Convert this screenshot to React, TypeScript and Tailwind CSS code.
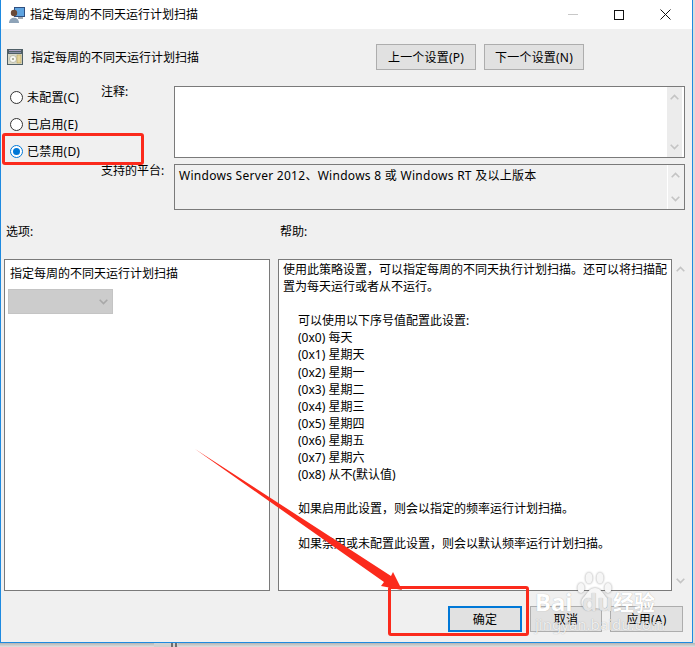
const helpLines: { text: string; indent?: boolean }[] = [
  { text: '使用此策略设置，可以指定每周的不同天执行计划扫描。还可以将扫描配' },
  { text: '置为每天运行或者从不运行。' },
  { text: '' },
  { text: '可以使用以下序号值配置此设置:', indent: true },
  { text: '(0x0) 每天', indent: true },
  { text: '(0x1) 星期天', indent: true },
  { text: '(0x2) 星期一', indent: true },
  { text: '(0x3) 星期二', indent: true },
  { text: '(0x4) 星期三', indent: true },
  { text: '(0x5) 星期四', indent: true },
  { text: '(0x6) 星期五', indent: true },
  { text: '(0x7) 星期六', indent: true },
  { text: '(0x8) 从不(默认值)', indent: true },
  { text: '' },
  { text: '如果启用此设置，则会以指定的频率运行计划扫描。', indent: true },
  { text: '' },
  { text: '如果禁用或未配置此设置，则会以默认频率运行计划扫描。', indent: true },
];

function Chevron({ up, color = '#c4c4c4' }: { up?: boolean; color?: string }) {
  return (
    <svg width="9" height="6" viewBox="0 0 9 6" fill="none" stroke={color} strokeWidth="1.6">
      <path d={up ? 'M0.7 5.2 L4.5 1.4 L8.3 5.2' : 'M0.7 0.8 L4.5 4.6 L8.3 0.8'} />
    </svg>
  );
}

function Radio({ label, checked }: { label: string; checked?: boolean }) {
  return (
    <div className="flex items-center h-[17px] gap-[4px]">
      <div className={`w-[13px] h-[13px] rounded-full border bg-white flex items-center justify-center ${checked ? 'border-[#0078d7]' : 'border-[#333333]'}`}>
        {checked && <div className="w-[7px] h-[7px] rounded-full bg-[#0078d7]" />}
      </div>
      <span className="tracking-[0.2px]">{label}</span>
    </div>
  );
}

function SmallScroll({ className }: { className: string }) {
  return (
    <div className={`flex flex-col justify-between items-center py-[7px] w-[15px] ${className}`}>
      <Chevron up />
      <Chevron />
    </div>
  );
}

function Button({ label, className, primary }: { label: string; className: string; primary?: boolean }) {
  return (
    <div className={`flex items-center justify-center h-[26px] tracking-[0.2px] bg-[#e1e1e1] ${primary ? 'border-2 border-[#0078d7]' : 'border border-[#adadad]'} ${className}`}>
      {label}
    </div>
  );
}

export default function App() {
  return (
    <div className="relative w-[695px] h-[647px] overflow-hidden bg-[#dcdcdc] text-[12px] leading-[17px] text-black font-['Noto_Sans','Noto_Sans_CJK_SC',sans-serif]">
      <div className="flex flex-col w-[693px] h-[643px] bg-[#f0f0f0] border-x border-b border-[#1e8ae0]">
        {/* Title bar */}
        <div className="flex items-center h-[29px] bg-white shrink-0">
          <svg width="16" height="16" viewBox="0 0 16 16" className="ml-[8px] mr-[5px]">
            <rect x="5" y="0" width="11" height="10" fill="#2f4f80" />
            <rect x="6" y="1" width="9" height="8" fill="#5fa4e0" />
            <rect x="9" y="10" width="5" height="2" fill="#a0a8b0" />
            <circle cx="5" cy="6" r="3.2" fill="#6a4a38" />
            <path d="M0 16 C0 9 10 9 10 16 Z" fill="#8ea3b8" />
          </svg>
          <span>指定每周的不同天运行计划扫描</span>
          <div className="ml-auto flex items-center mr-[4px]">
            <div className="w-[46px] flex justify-center">
              <div className="w-[10px] h-px bg-[#c8c8c8]" />
            </div>
            <div className="w-[46px] flex justify-center">
              <div className="w-[10px] h-[10px] border border-[#111111]" />
            </div>
            <div className="w-[46px] flex justify-center">
              <svg width="11" height="11" viewBox="0 0 11 11" stroke="#111111" strokeWidth="1">
                <path d="M0.5 0.5 L10.5 10.5 M10.5 0.5 L0.5 10.5" />
              </svg>
            </div>
          </div>
        </div>

        {/* Policy name and prev / next */}
        <div className="flex items-center h-[26px] mt-[15px] shrink-0">
          <svg width="16" height="16" viewBox="0 0 16 16" className="ml-[6px] mr-[8px]">
            <rect x="0" y="0" width="16" height="16" fill="#4f5f66" />
            <rect x="2" y="1" width="12" height="1" fill="#a8a0c0" />
            <rect x="2" y="3" width="12" height="1" fill="#8890a8" />
            <rect x="1" y="5" width="14" height="10" fill="#d8d8c8" />
            <circle cx="6" cy="10" r="3.5" fill="#f8f8f4" stroke="#a0a088" strokeWidth="0.6" />
            <circle cx="6" cy="10" r="1" fill="#9a9a80" />
            <rect x="10" y="6" width="4" height="8" fill="#e4d49a" stroke="#b09a50" strokeWidth="0.5" />
          </svg>
          <span>指定每周的不同天运行计划扫描</span>
          <div className="ml-auto flex gap-[8px] mr-[108px]">
            <Button label="上一个设置(P)" className="w-[100px]" />
            <Button label="下一个设置(N)" className="w-[100px]" />
          </div>
        </div>

        {/* Radios, comment, platform */}
        <div className="flex mt-[16px] shrink-0">
          <div className="flex flex-col gap-[10px] w-[100px] pl-[9px] pt-[3px]">
            <Radio label="未配置(C)" />
            <Radio label="已启用(E)" />
            <Radio label="已禁用(D)" checked />
          </div>
          <div className="flex flex-col justify-between w-[73px] h-[124px]">
            <span className="mt-[-3px]">注释:</span>
            <span className="mb-[31px]">支持的平台:</span>
          </div>
          <div className="flex flex-col gap-[6px] w-[511px]">
            <div className="flex justify-end h-[72px] bg-white border border-[#7a7a7a]">
              <SmallScroll className="bg-[#ececec] mr-[2px]" />
            </div>
            <div className="flex justify-between h-[46px] border border-[#7a7a7a]">
              <span className="pl-[4px] pt-[2px] tracking-[0.28px]">Windows Server 2012、Windows 8 或 Windows RT 及以上版本</span>
              <SmallScroll className="border-l border-white mr-[2px]" />
            </div>
          </div>
        </div>

        {/* Section labels */}
        <div className="flex mt-[13px] h-[17px] shrink-0">
          <span className="ml-[5px] w-[274px]">选项:</span>
          <span>帮助:</span>
        </div>

        {/* Option and help panels */}
        <div className="flex mt-[19px] h-[332px] shrink-0">
          <div className="ml-[3px] w-[266px] bg-white border border-[#7a7a7a] pt-[5px] px-[5px]">
            <div>指定每周的不同天运行计划扫描</div>
            <div className="flex items-center justify-end mt-[7px] ml-[-2px] w-[105px] h-[25px] bg-[#cccccc] border border-[#c4c4c4] pr-[4px]">
              <Chevron color="#a8a8a8" />
            </div>
          </div>
          <div className="ml-[8px] w-[394px] bg-white border border-[#7a7a7a] pl-[4px] pt-[1px]">
            {helpLines.map((line, i) => (
              <div key={i} className={`h-[17.1px] whitespace-nowrap ${line.indent ? 'pl-[15px]' : ''}`}>
                {line.text}
              </div>
            ))}
          </div>
          <SmallScroll className="ml-[1px] h-[332px] bg-[#f0f0f0]" />
        </div>

        {/* Dialog buttons */}
        <div className="flex justify-end gap-[8px] mt-[15px] mr-[9px] shrink-0">
          <Button label="确定" className="w-[74px]" primary />
          <Button label="取消" className="w-[72px]" />
          <Button label="应用(A)" className="w-[73px]" />
        </div>
      </div>

      {/* What shows of the window behind */}
      <div className="flex h-[4px] bg-gradient-to-b from-[#b4b4b4] to-[#e0e0e0]">
        <div className="flex ml-[154px] w-[24px] bg-[#d0d0d0]">
          <div className="ml-[17px] w-[2px] bg-[#6e6e6e]" />
          <div className="ml-[2px] w-[2px] bg-[#6e6e6e]" />
        </div>
      </div>

      {/* Baidu watermark */}
      <div className="absolute left-[533px] top-[570px] w-[125px] h-[62px] text-white pointer-events-none [text-shadow:0_0_1px_rgba(0,0,0,0.3)]">
        <svg width="40" height="40" viewBox="0 0 40 40" className="absolute left-[42px] top-[1px] drop-shadow-[0_0_1px_rgba(0,0,0,0.4)]" fill="#f6f6f6">
          <ellipse cx="6" cy="17" rx="3.5" ry="5" />
          <ellipse cx="14" cy="7" rx="3.5" ry="5.5" />
          <ellipse cx="25" cy="7" rx="3.5" ry="5.5" />
          <ellipse cx="33" cy="17" rx="3.5" ry="5" />
          <path d="M20 17 C14 17 12 23 8 27 C4 32 8 39 14 38 C17 37 23 37 26 38 C32 39 36 32 32 27 C28 23 26 17 20 17 Z" />
        </svg>
        <span className="absolute left-[2px] top-[19px] text-[24px] leading-[26px] font-bold">Bai</span>
        <span className="absolute left-[49px] top-[19px] text-[24px] leading-[26px] font-bold text-[#e4e4e4]">du</span>
        <span className="absolute left-[80px] top-[20px] text-[21px] leading-[24px] font-bold">经验</span>
        <span className="absolute left-[2px] top-[46px] text-[15px] leading-[17px] text-white/80">jingyan.baidu.com</span>
      </div>

      {/* Red annotations */}
      <div className="absolute left-[2px] top-[133px] w-[142px] h-[32px] border-[3px] border-[#fb2a1c] rounded-[3px]" />
      <div className="absolute left-[388px] top-[586px] w-[141px] h-[50px] border-[3px] border-[#fb2a1c] rounded-[3px]" />
      <svg width="695" height="647" className="absolute left-0 top-0 pointer-events-none">
        <polygon points="195,449 391,576 393,572 402,590 381,586 384,582" fill="#fb2a1c" />
      </svg>
    </div>
  );
}
